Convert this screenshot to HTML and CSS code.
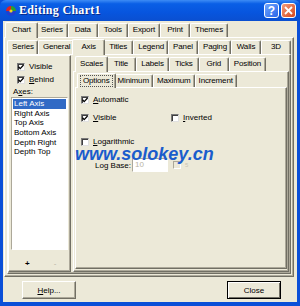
FILE: index.html
```html
<!DOCTYPE html>
<html lang="en">

<head>
    <meta charset="UTF-8">
    <title>Editing Chart1</title>
    <link rel="stylesheet" href="styles.css">
</head>

<body>
    <div class="window">
        <div class="titlebar">
            <svg class="app-icon" width="10" height="10" viewBox="0 0 10 10">
                <path d="M5 5L5 0A5 5 0 0 0 0 5z" fill="#e02020" />
                <path d="M5 5L10 5A5 5 0 0 0 5 0z" fill="#2ca02c" />
                <path d="M5 5L0 5A5 5 0 0 0 10 5z" fill="#2040d0" />
                <circle cx="5" cy="5" r="1.6" fill="#f4d020" />
            </svg>
            <span class="title">Editing Chart1</span>
            <div class="caption-buttons">
                <span class="cap-btn cap-help">?</span>
                <span class="cap-btn cap-close">
                    <svg width="9" height="9" viewBox="0 0 9 9" stroke="#fff" stroke-width="1.8">
                        <line x1="1" y1="1" x2="8" y2="8" />
                        <line x1="8" y1="1" x2="1" y2="8" />
                    </svg>
                </span>
            </div>
        </div>

        <div class="client">
            <div class="tabs tabs-main">
                <span class="tab active">Chart</span>
                <span class="tab">Series</span>
                <span class="tab">Data</span>
                <span class="tab">Tools</span>
                <span class="tab">Export</span>
                <span class="tab">Print</span>
                <span class="tab">Themes</span>
            </div>

            <div class="page page-main">
                <div class="tabs tabs-sub">
                    <span class="tab">Series</span>
                    <span class="tab">General</span>
                    <span class="tab active">Axis</span>
                    <span class="tab">Titles</span>
                    <span class="tab">Legend</span>
                    <span class="tab">Panel</span>
                    <span class="tab">Paging</span>
                    <span class="tab">Walls</span>
                    <span class="tab">3D</span>
                </div>

                <div class="page page-axis">
                    <div class="axes-panel">
                        <div class="check">
                            <span class="box">
                                <svg width="6" height="6" viewBox="0 0 6 6" fill="none" stroke="#000" stroke-width="1.3">
                                    <polyline points="0.5 2.8 2.2 4.6 5.6 1" />
                                </svg>
                            </span>
                            <span>Visible</span>
                        </div>
                        <div class="check">
                            <span class="box">
                                <svg width="6" height="6" viewBox="0 0 6 6" fill="none" stroke="#000" stroke-width="1.3">
                                    <polyline points="0.5 2.8 2.2 4.6 5.6 1" />
                                </svg>
                            </span>
                            <span><u>B</u>ehind</span>
                        </div>
                        <div class="axes-label">A<u>x</u>es:</div>
                        <ul class="axes-list">
                            <li class="selected">Left Axis</li>
                            <li>Right Axis</li>
                            <li>Top Axis</li>
                            <li>Bottom Axis</li>
                            <li>Depth Right</li>
                            <li>Depth Top</li>
                        </ul>
                        <div class="list-tools">
                            <span>+</span>
                            <span class="dim">-</span>
                        </div>
                    </div>

                    <div class="axis-tabs">
                        <div class="tabs tabs-scales">
                            <span class="tab active">Scales</span>
                            <span class="tab">Title</span>
                            <span class="tab">Labels</span>
                            <span class="tab">Ticks</span>
                            <span class="tab">Grid</span>
                            <span class="tab">Position</span>
                        </div>

                        <div class="page page-scales">
                            <div class="tabs tabs-options">
                                <span class="tab active"><span class="focus">Options</span></span>
                                <span class="tab">Minimum</span>
                                <span class="tab">Maximum</span>
                                <span class="tab">Increment</span>
                            </div>

                            <div class="page page-options">
                                <div class="check row-auto">
                                    <span class="box">
                                        <svg width="6" height="6" viewBox="0 0 6 6" fill="none" stroke="#000" stroke-width="1.3">
                                            <polyline points="0.5 2.8 2.2 4.6 5.6 1" />
                                        </svg>
                                    </span>
                                    <span><u>A</u>utomatic</span>
                                </div>
                                <div class="row-pair">
                                    <div class="check">
                                        <span class="box">
                                            <svg width="6" height="6" viewBox="0 0 6 6" fill="none" stroke="#000" stroke-width="1.3">
                                                <polyline points="0.5 2.8 2.2 4.6 5.6 1" />
                                            </svg>
                                        </span>
                                        <span><u>V</u>isible</span>
                                    </div>
                                    <div class="check">
                                        <span class="box"></span>
                                        <span><u>I</u>nverted</span>
                                    </div>
                                </div>
                                <div class="check row-log">
                                    <span class="box"></span>
                                    <span><u>L</u>ogarithmic</span>
                                </div>
                                <div class="log-base">
                                    <span class="log-label">Lo<u>g</u> Base:</span>
                                    <span class="field">10</span>
                                    <span class="spin"></span>
                                    <span class="spin-text">5</span>
                                </div>

                                <div class="watermark">www.solokey.cn</div>
                            </div>
                        </div>
                    </div>
                </div>
            </div>

            <div class="footer">
                <button class="btn"><u>H</u>elp...</button>
                <button class="btn btn-default">Close</button>
            </div>
        </div>
    </div>
</body>

</html>
```

FILE: styles.css
```css
:root {
    --face: #ece9d8;
    --shadow: #aca899;
    --dark: #716f64;
    --light: #ffffff;
    --frame: #0a4fd8;
}

* {
    margin: 0;
    padding: 0;
    box-sizing: border-box;
}

body {
    font-family: "Liberation Sans", Arial, sans-serif;
    font-size: 8px;
    color: #000;
    background: #fff;
}

.window {
    width: 300px;
    height: 306px;
    background: var(--frame);
    display: flex;
    flex-direction: column;
    padding: 0 3px 4px 3px;
}

/* title bar */

.titlebar {
    height: 21px;
    margin: 0 -3px;
    display: flex;
    align-items: center;
    padding: 0 4px 0 6px;
    background: linear-gradient(180deg, #3d8cf5 0%, #0a5fe6 18%, #0755de 60%, #0a4fd0 100%);
    border-radius: 6px 6px 0 0;
}

.app-icon {
    flex-shrink: 0;
}

.title {
    margin-left: 3px;
    font-family: "Liberation Serif", "Times New Roman", serif;
    font-weight: bold;
    font-size: 12px;
    letter-spacing: 0.3px;
    color: #fff;
    text-shadow: 1px 1px 0 #0a2a8a;
}

.caption-buttons {
    margin-left: auto;
    display: flex;
    gap: 2px;
}

.cap-btn {
    width: 15px;
    height: 15px;
    border: 1px solid #fff;
    border-radius: 3px;
    display: flex;
    align-items: center;
    justify-content: center;
}

.cap-help {
    background: linear-gradient(135deg, #6fa5ff, #2a66e8);
    color: #fff;
    font-family: "Liberation Sans", Arial, sans-serif;
    font-weight: bold;
    font-size: 12px;
}

.cap-close {
    background: linear-gradient(135deg, #f29c7c, #d8471c);
}

/* client area */

.client {
    flex: 1;
    background: var(--face);
    display: flex;
    flex-direction: column;
    padding: 0 3px 0 1px;
}

.tabs {
    display: flex;
    align-items: flex-end;
    height: 16px;
    padding-left: 0;
    position: relative;
    z-index: 1;
    flex-shrink: 0;
}

.tab {
    min-width: 30px;
    height: 14px;
    line-height: 12px;
    padding: 0 4px;
    text-align: center;
    letter-spacing: -0.15px;
    border: 1px solid;
    border-color: var(--light) var(--dark) transparent var(--light);
    border-bottom: 0;
    border-radius: 2px 2px 0 0;
    background: var(--face);
    box-shadow: inset -1px 0 var(--shadow);
    white-space: nowrap;
}

.tab.active {
    min-width: 33px;
    height: 16px;
    margin: 0 -2px -1px;
    padding: 0 4px;
    line-height: 13px;
    position: relative;
    z-index: 2;
}

.tab.active:first-child {
    margin-left: 0;
}

.page {
    border: 1px solid;
    border-color: var(--light) var(--dark) var(--dark) var(--light);
    box-shadow: inset -1px -1px var(--shadow);
    background: var(--face);
}

.tabs-main {
    padding-left: 1px;
}

.page-main {
    flex: 1;
    display: flex;
    flex-direction: column;
    padding: 0 2px 2px 2px;
}

.page-axis {
    flex: 1;
    display: flex;
    gap: 2px;
    padding: 0 1px 1px 0;
}

/* left: axes list */

.axes-panel {
    width: 63px;
    border: 1px solid;
    border-color: var(--light) var(--dark) var(--dark) var(--light);
    box-shadow: inset -1px -1px var(--shadow);
    display: flex;
    flex-direction: column;
    padding: 4px 0 0 0;
}

.check {
    display: flex;
    align-items: center;
    gap: 4px;
    height: 13px;
}

.axes-panel .check {
    padding-left: 8px;
}

.box {
    width: 8px;
    height: 8px;
    background: #fff;
    border: 1px solid;
    border-color: #7a7a7a #e0e0e0 #e0e0e0 #7a7a7a;
    box-shadow: inset 1px 1px #404040;
    display: flex;
    align-items: center;
    justify-content: center;
    flex-shrink: 0;
}

.axes-label {
    height: 11px;
    line-height: 11px;
    padding-left: 4px;
}

.axes-list {
    list-style: none;
    background: #fff;
    margin: 0 2px;
    height: 153px;
    border: 1px solid;
    border-color: var(--shadow) var(--light) var(--light) var(--shadow);
    padding: 1px 1px 0 1px;
}

.axes-list li {
    height: 9.7px;
    line-height: 9.7px;
    padding-left: 1px;
}

.axes-list li.selected {
    background: #316ac5;
    color: #fff;
}

.list-tools {
    flex: 1;
    display: flex;
    align-items: center;
    padding: 6px 0 0 16px;
    gap: 24px;
    font-weight: bold;
}

.list-tools .dim {
    color: #b8b4a4;
    font-weight: normal;
}

/* right: scales */

.axis-tabs {
    flex: 1;
    display: flex;
    flex-direction: column;
}

.tabs-scales {
    padding-left: 2px;
}

.page-scales {
    flex: 1;
    display: flex;
    flex-direction: column;
    padding: 0 1px 2px 1px;
}

.tabs-options {
    height: 15px;
    padding-left: 2px;
}

.tabs-options .tab {
    height: 13px;
    padding: 0 3px;
}

.tabs-options .tab.active {
    height: 15px;
    padding: 1px 2px 0;
}

.focus {
    display: block;
    line-height: 10px;
    padding: 0 2px;
    border: 1px dotted #555;
}

.page-options {
    flex: 1;
    position: relative;
    padding: 5px 0 0 5px;
}

.row-pair {
    display: grid;
    grid-template-columns: 90px auto;
    margin-top: 5px;
}

.row-log {
    margin-top: 11px;
}

.log-base {
    display: flex;
    align-items: center;
    height: 14px;
    margin-top: 10px;
}

.log-label {
    width: 37px;
    margin-left: 14px;
}

.field {
    width: 36px;
    height: 14px;
    line-height: 12px;
    padding-left: 2px;
    background: #fff;
    color: #b8b4a4;
    border: 1px solid;
    border-color: var(--shadow) var(--light) var(--light) var(--shadow);
}

.spin {
    width: 8px;
    height: 8px;
    margin-left: 5px;
    border: 1px solid;
    border-color: var(--shadow) var(--light) var(--light) var(--shadow);
}

.spin-text {
    margin-left: 4px;
    color: #c8c4b4;
    font-size: 6px;
}

.watermark {
    position: absolute;
    left: -1px;
    top: 57px;
    font-size: 18px;
    line-height: 18px;
    font-weight: bold;
    font-style: italic;
    color: #1a5ccc;
    white-space: nowrap;
}

/* footer buttons */

.footer {
    height: 25px;
    flex-shrink: 0;
    display: flex;
    justify-content: space-between;
    align-items: flex-start;
    padding: 4px 13px 0 18px;
}

.btn {
    width: 54px;
    height: 18px;
    font-family: inherit;
    font-size: 8px;
    background: var(--face);
    border: 1px solid;
    border-color: var(--light) var(--dark) var(--dark) var(--light);
    box-shadow: inset -1px -1px var(--shadow);
}

.btn-default {
    border: 1px solid #000;
    box-shadow: inset 1px 1px var(--light), inset -1px -1px var(--dark);
}
```
